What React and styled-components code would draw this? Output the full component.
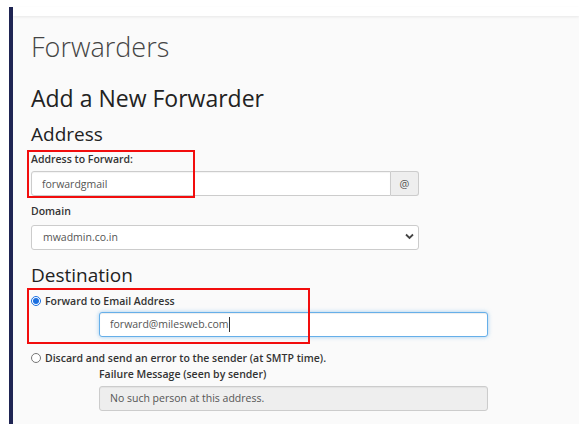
import React from 'react';
import styled, { createGlobalStyle } from 'styled-components';

const Global = createGlobalStyle`
  html, body { margin: 0; padding: 0; background: #fff; }
  body { font-family: 'Open Sans', 'Noto Sans', sans-serif; color: #333; }
  * { box-sizing: border-box; }
`;

const Frame = styled.div`
  margin: 7px 0 0 9px;
  border-left: 4px solid #1f2553;
  width: 570px;
  height: 417px;
  display: flex;
  flex-direction: column;
`;

const TopBar = styled.div`
  height: 9px;
  background: #fff;
  box-shadow: 0 1px 3px rgba(0, 0, 0, 0.08);
  position: relative;
  z-index: 1;
`;

const Content = styled.div`
  flex: 1;
  background: #fafafa;
  padding: 13px 0 0 18px;
`;

const Title = styled.h1`
  margin: 0;
  font-size: 27px;
  font-weight: 300;
  line-height: 36px;
  color: #444;
`;

const SubTitle = styled.h2`
  margin: 18px 0 0;
  font-size: 23px;
  font-weight: 400;
  line-height: 30px;
  color: #222;
`;

const Section = styled.h3`
  margin: ${(p) => p.top || '8px'} 0 0;
  font-size: 19px;
  font-weight: 400;
  line-height: 26px;
  color: #222;
`;

const Group = styled.div`
  position: relative;
  margin-top: ${(p) => p.top || '0'};
  padding-left: ${(p) => p.indent || '0'};
`;

const Highlight = styled.div`
  position: absolute;
  left: ${(p) => p.left};
  top: ${(p) => p.top};
  width: ${(p) => p.w};
  height: ${(p) => p.h};
  border: 2px solid #f20d0d;
  pointer-events: none;
`;

const Label = styled.label`
  display: block;
  font-size: 10.5px;
  font-weight: 600;
  line-height: 15px;
  color: #333;
  margin-bottom: ${(p) => p.gap || '4px'};
`;

const InputRow = styled.div`
  display: flex;
  width: ${(p) => p.w || '388px'};
`;

const Field = styled.input`
  flex: 1;
  min-width: 0;
  height: 25px;
  padding: 0 10px;
  font-family: inherit;
  font-size: 10.5px;
  color: #555;
  background: ${(p) => (p.disabled ? '#eee' : '#fff')};
  border: 1px solid ${(p) => (p.focus ? '#66afe9' : '#ccc')};
  border-radius: ${(p) => (p.addon ? '3px 0 0 3px' : '3px')};
  box-shadow: ${(p) =>
    p.focus ? 'inset 0 1px 1px rgba(0,0,0,.075), 0 0 4px rgba(102,175,233,.6)' : 'inset 0 1px 1px rgba(0,0,0,.05)'};
  outline: none;
`;

const Addon = styled.span`
  width: 28px;
  height: 25px;
  display: flex;
  align-items: center;
  justify-content: center;
  font-size: 11px;
  color: #555;
  background: #eee;
  border: 1px solid #ccc;
  border-left: none;
  border-radius: 0 3px 3px 0;
`;

const SelectWrap = styled.div`
  position: relative;
  width: 388px;
`;

const Select = styled.select`
  width: 100%;
  height: 25px;
  padding: 0 24px 0 11px;
  font-family: inherit;
  font-size: 10.5px;
  color: #555;
  background: #fff;
  border: 1px solid #ccc;
  border-radius: 3px;
  appearance: none;
  outline: none;
`;

const Chevron = styled.svg`
  position: absolute;
  right: 5px;
  top: 9px;
  pointer-events: none;
`;

const Caret = styled.span`
  position: absolute;
  left: 130px;
  top: 5px;
  width: 1px;
  height: 15px;
  background: #333;
`;

const FieldBox = styled.div`
  position: relative;
  width: 389px;
  display: flex;
`;

const RadioRow = styled.label`
  display: flex;
  align-items: center;
  gap: 4px;
  font-size: 10.5px;
  font-weight: 600;
  line-height: 15px;
  color: #333;
  margin-top: ${(p) => p.top || '0'};
`;

const Radio = styled.input`
  margin: 0;
  width: 10px;
  height: 10px;
  accent-color: #1a6fe0;
`;

export default function App() {
  return (
    <>
      <Global />
      <Frame>
        <TopBar />
        <Content>
          <Title>Forwarders</Title>
          <SubTitle>Add a New Forwarder</SubTitle>
          <Section>Address</Section>
          <Group top="5px">
            <Label>Address to Forward:</Label>
            <InputRow>
              <Field addon defaultValue="forwardgmail" readOnly />
              <Addon>@</Addon>
            </InputRow>
            <Highlight left="-4px" top="-2px" w="168px" h="48px" />
          </Group>
          <Group top="8px">
            <Label gap="5px">Domain</Label>
            <SelectWrap>
              <Select defaultValue="mwadmin.co.in">
                <option>mwadmin.co.in</option>
              </Select>
              <Chevron width="9" height="7" viewBox="0 0 9 7">
                <path d="M1 1.5l3.5 3.5 3.5-3.5" fill="none" stroke="#444" strokeWidth="1.8" />
              </Chevron>
            </SelectWrap>
          </Group>
          <Section top="12px">Destination</Section>
          <Group top="6px">
            <RadioRow>
              <Radio type="radio" name="dest" defaultChecked />
              Forward to Email Address
            </RadioRow>
            <Group top="3px" indent="68px">
              <FieldBox>
                <Field focus defaultValue="forward@milesweb.com" readOnly />
                <Caret />
              </FieldBox>
            </Group>
            <Highlight left="-4px" top="-6px" w="283px" h="56px" />
          </Group>
          <RadioRow top="14px">
            <Radio type="radio" name="dest" />
            Discard and send an error to the sender (at SMTP time).
          </RadioRow>
          <Group top="1px" indent="68px">
            <Label gap="4px">Failure Message (seen by sender)</Label>
            <FieldBox>
              <Field disabled defaultValue="No such person at this address." />
            </FieldBox>
          </Group>
        </Content>
      </Frame>
    </>
  );
}
